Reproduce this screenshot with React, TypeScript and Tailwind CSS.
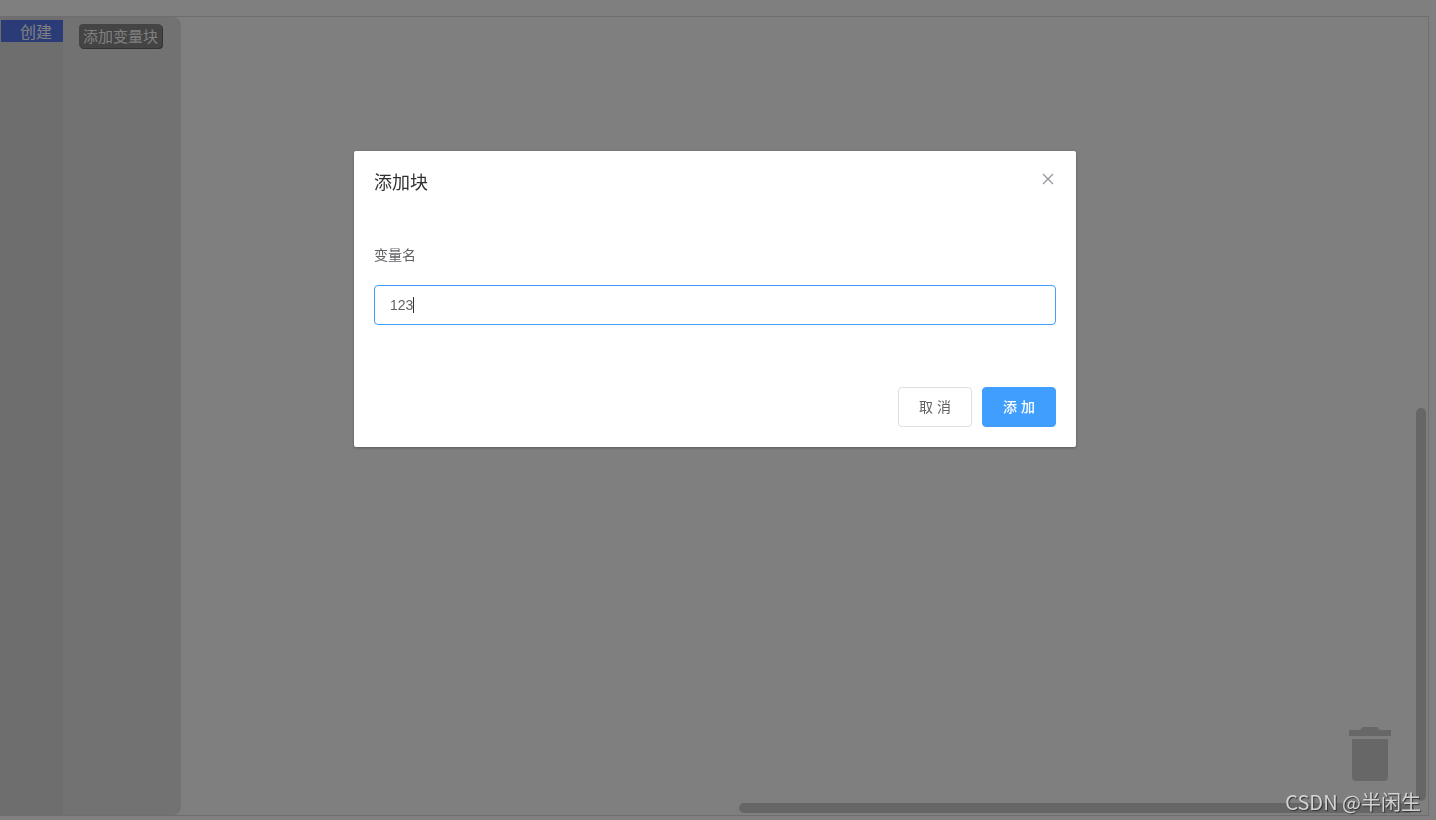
import { useState } from "react";

// Trash can in the corner of the workspace
const TrashIcon = () => (
  <svg viewBox="0 0 42 54" width="42" height="54" fill="#cfcfcf" aria-hidden="true">
    <path d="M0 3h11l3-3h14l3 3h11v6H0z" />
    <path d="M3 12h36v38a4 4 0 0 1-4 4H7a4 4 0 0 1-4-4z" />
  </svg>
);

const CloseIcon = () => (
  <svg viewBox="0 0 12 12" width="12" height="12" fill="none" stroke="#909399" strokeWidth="1.2" aria-hidden="true">
    <path d="M1 1l10 10M11 1L1 11" />
  </svg>
);

const categories = [{ id: "create", label: "创建" }];

function Workspace() {
  return (
    <main className="relative mr-[7px] flex flex-1 border border-[#dddddd] bg-white">
      {/* Toolbox */}
      <nav className="w-[62px] bg-[#dddddd] pt-[3px]">
        {categories.map((c) => (
          <button
            key={c.id}
            className="flex h-[22px] w-full items-center bg-[#5577ee] pt-1 pl-[19px] text-base leading-5 text-white"
          >
            {c.label}
          </button>
        ))}
      </nav>

      {/* Flyout */}
      <div className="w-[118px] rounded-r-lg bg-[#e4e4e4] pt-[7px] pl-4">
        <button className="flex h-6 w-[83px] items-center justify-center rounded-[4px] bg-[#888888] pt-0.5 text-[15px] leading-6 whitespace-nowrap text-white shadow-[1px_1px_0_#666666]">
          添加变量块
        </button>
      </div>

      {/* Scrollbars and trash */}
      <div className="absolute top-[49%] right-0.5 bottom-3.5 w-2.5 rounded-full bg-[#cccccc]" />
      <div className="absolute right-3.5 bottom-0.5 left-[738px] h-2.5 rounded-full bg-[#cccccc]" />
      <div className="absolute right-[37px] bottom-[34px]">
        <TrashIcon />
      </div>
    </main>
  );
}

function AddBlockDialog() {
  const [name, setName] = useState("123");

  return (
    <div className="fixed inset-0 flex items-start justify-center bg-black/50 pt-[151px] pr-1.5">
      <div
        role="dialog"
        aria-labelledby="dialog-title"
        className="w-[722px] max-w-full rounded-[2px] bg-white text-sm text-[#606266] shadow-[0_1px_3px_rgba(0,0,0,0.3)]"
      >
        <header className="flex items-start justify-between px-5 pt-5 pb-2.5">
          <h2 id="dialog-title" className="text-lg leading-6 text-[#303133]">
            添加块
          </h2>
          <button aria-label="关闭" className="flex h-4 w-4 items-center justify-center">
            <CloseIcon />
          </button>
        </header>

        <div className="px-5 py-[30px]">
          <label htmlFor="variable-name" className="block pb-2.5 leading-10">
            变量名
          </label>
          <div className="relative mb-[22px]">
            <input
              id="variable-name"
              type="text"
              value={name}
              onChange={(e) => setName(e.target.value)}
              className="block h-10 w-full rounded-[4px] border border-[#409eff] px-[15px] text-sm caret-transparent outline-none"
            />
            {/* Text cursor, placed after the typed name */}
            <div className="pointer-events-none absolute inset-y-0 left-4 flex items-center" aria-hidden="true">
              <span className="invisible">{name}</span>
              <span className="h-4 w-px bg-[#303133]" />
            </div>
          </div>
        </div>

        <footer className="flex justify-end gap-2.5 px-5 pt-2.5 pb-5">
          <button className="h-10 w-[74px] rounded-[4px] border border-[#dcdfe6] bg-white">
            取 消
          </button>
          <button className="h-10 w-[74px] rounded-[4px] border border-[#409eff] bg-[#409eff] font-medium text-white">
            添 加
          </button>
        </footer>
      </div>
    </div>
  );
}

export default function App() {
  return (
    <div className="flex min-h-screen flex-col bg-white pt-4 pb-1 font-['Liberation_Sans','Noto_Sans_CJK_SC',sans-serif]">
      <Workspace />
      <AddBlockDialog />
      <p className="fixed right-[15px] bottom-1 font-['Noto_Sans_CJK_SC',sans-serif] text-xl leading-7 text-[#d4d4d4] [text-shadow:1px_1px_1px_#333333]">
        CSDN @半闲生
      </p>
    </div>
  );
}
